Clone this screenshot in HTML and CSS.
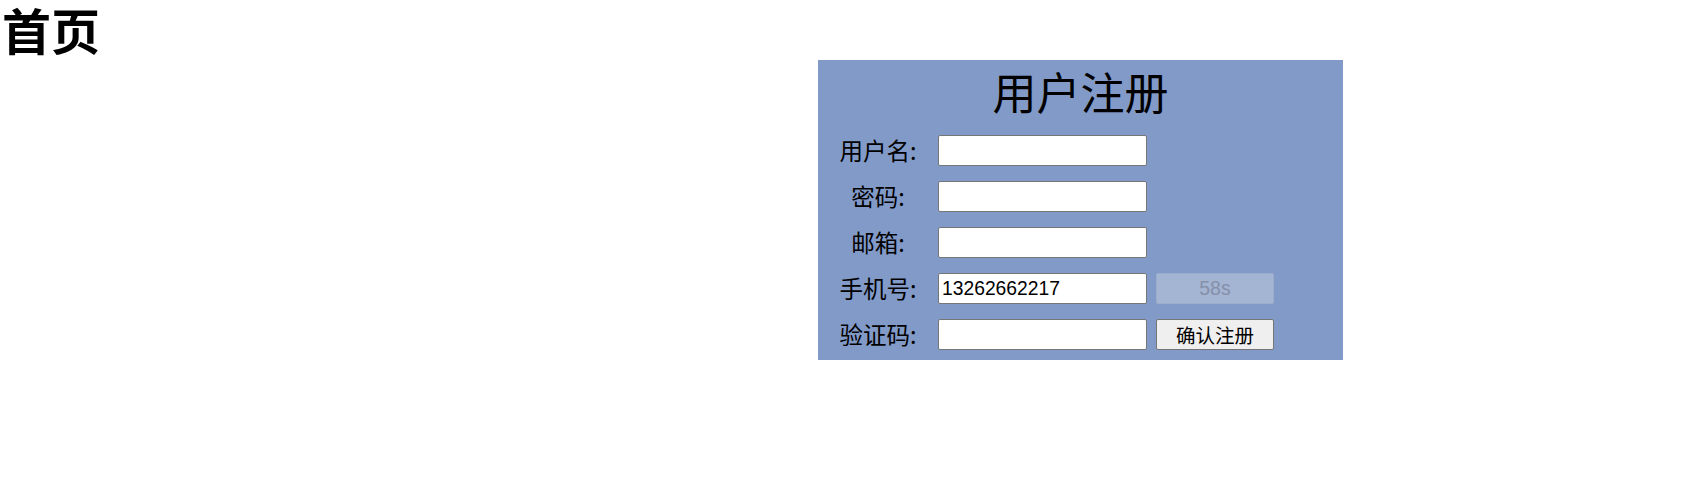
FILE: index.html
```html
<!DOCTYPE html>
<html lang="zh">
<head>
<meta charset="utf-8">
<title>首页</title>
<link rel="stylesheet" href="styles.css">
</head>
<body>
<h1 class="page-title">首页</h1>
<div class="register">
  <div class="register-title">用户注册</div>
  <div class="row">
    <label class="label">用户名:</label>
    <input class="field" type="text">
  </div>
  <div class="row">
    <label class="label">密码:</label>
    <input class="field" type="password">
  </div>
  <div class="row">
    <label class="label">邮箱:</label>
    <input class="field" type="text">
  </div>
  <div class="row">
    <label class="label">手机号:</label>
    <input class="field" type="text" value="13262662217">
    <button class="btn btn-disabled" disabled>58s</button>
  </div>
  <div class="row">
    <label class="label">验证码:</label>
    <input class="field" type="text">
    <button class="btn">确认注册</button>
  </div>
</div>
</body>
</html>
```
FILE: styles.css
```css
html, body {
  margin: 0;
  padding: 0;
  background: #ffffff;
}
body {
  font-family: "Liberation Sans", "Noto Sans CJK SC", sans-serif;
  color: #000;
}
.page-title {
  margin: 0;
  padding-left: 2px;
  font-size: 49px;
  font-weight: bold;
  line-height: 58px;
  height: 60px;
  font-family: "Noto Sans CJK SC", sans-serif;
}
.register {
  margin-left: 818px;
  width: 525px;
  height: 300px;
  box-sizing: border-box;
  background: #829ac8;
  padding-bottom: 9px;
  display: flex;
  flex-direction: column;
  gap: 15px;
}
.register-title {
  height: 60px;
  line-height: 62px;
  text-align: center;
  font-size: 44px;
  font-family: "Noto Sans CJK SC", sans-serif;
}
.row {
  display: flex;
  align-items: center;
  height: 31px;
}
.label {
  width: 120px;
  text-align: center;
  font-size: 23.5px;
  font-family: "Noto Sans CJK SC", sans-serif;
  line-height: 31px;
}
.field {
  box-sizing: border-box;
  width: 209px;
  height: 31px;
  margin: 0;
  padding: 0 3px;
  border: 1px solid #767676;
  border-radius: 2px;
  background: #fff;
  font-family: "Liberation Sans", "Noto Sans CJK SC", sans-serif;
  font-size: 19.3px;
  color: #000;
  outline: none;
}
.btn {
  box-sizing: border-box;
  width: 118px;
  height: 31px;
  margin: 0 0 0 9px;
  padding: 0;
  border: 1px solid #767676;
  border-radius: 2px;
  background: #efefef;
  color: #000;
  font-family: "Liberation Sans", "Noto Sans CJK SC", sans-serif;
  font-size: 19.5px;
}
.btn-disabled {
  background: #a4b4d3;
  border-color: #9dadcd;
  color: #8690a8;
}
```
